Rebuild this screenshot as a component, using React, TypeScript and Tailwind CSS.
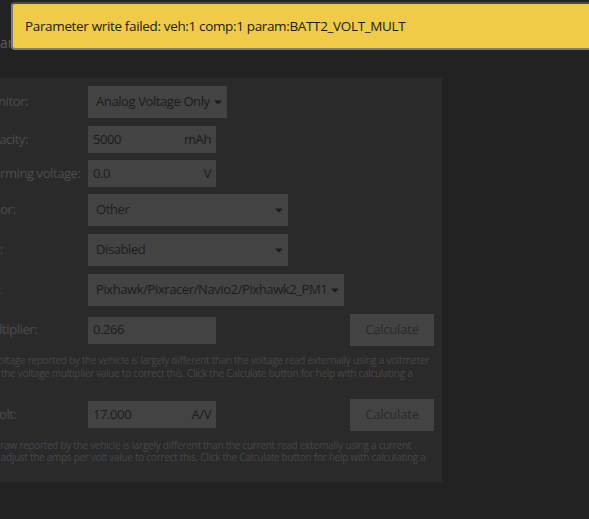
import React from "react";

const Arrow = () => (
  <svg width="8" height="5" viewBox="0 0 8 5" className="shrink-0">
    <path d="M0 0.5 L8 0.5 L4 4.5 Z" fill="#1c1c1c" />
  </svg>
);

function Label({ children }: { children: React.ReactNode }) {
  return (
    <div className="w-[153px] shrink-0 whitespace-nowrap text-[13px] tracking-[-0.42px] text-[#4d4d4d]">{children}</div>
  );
}

function Combo({ text, w, fit }: { text: string; w?: string; fit?: boolean }) {
  return (
    <div
      className={
        "h-[32px] bg-[#434343] flex items-center pl-[8px] pr-[5px] text-[13px] tracking-[-0.4px] text-[#1c1c1c] " +
        (fit ? "gap-[4px] " : "justify-between ") +
        (w ?? "")
      }
    >
      <span className="whitespace-nowrap">{text}</span>
      <Arrow />
    </div>
  );
}

function Field({ value, unit }: { value: string; unit?: string }) {
  return (
    <div className="h-[27px] w-[128px] bg-[#434343] flex items-center justify-between px-[5px] text-[13px] tracking-[-0.4px] text-[#1c1c1c]">
      <span>{value}</span>
      {unit ? <span>{unit}</span> : null}
    </div>
  );
}

function CalcButton() {
  return (
    <div className="h-[32px] w-[84px] bg-[#434343] flex items-center justify-center text-[13px] tracking-[-0.2px] text-[#2a2a2a]">
      Calculate
    </div>
  );
}

export default function App() {
  return (
    <div
      className="relative w-[589px] h-[519px] overflow-hidden bg-[#222222]"
      style={{ fontFamily: '"Open Sans", "Liberation Sans", sans-serif' }}
    >
      <div className="pt-[35px] h-[78px] text-[14px] leading-[16px] text-[#5c5c5c] whitespace-nowrap">ar</div>

      <div className="w-[442px] h-[404px] bg-[#2a2a2a] pt-[8px] overflow-hidden">
        <div className="-ml-[65px] flex flex-col">
          <div className="flex items-center h-[32px]">
            <Label>Battery monitor:</Label>
            <Combo text="Analog Voltage Only" fit />
          </div>
          <div className="flex items-center h-[27px] mt-[8px]">
            <Label>Battery capacity:</Label>
            <Field value="5000" unit="mAh" />
          </div>
          <div className="flex items-center h-[27px] mt-[7px]">
            <Label>Minimum arming voltage:</Label>
            <Field value="0.0" unit="V" />
          </div>
          <div className="flex items-center h-[32px] mt-[7px]">
            <Label>Power sensor:</Label>
            <Combo text="Other" w="w-[200px]" />
          </div>
          <div className="flex items-center h-[32px] mt-[8px]">
            <Label>Current pin:</Label>
            <Combo text="Disabled" w="w-[200px]" />
          </div>
          <div className="flex items-center h-[32px] mt-[8px]">
            <Label>Voltage pin:</Label>
            <Combo text="Pixhawk/Pixracer/Navio2/Pixhawk2_PM1" fit />
          </div>
          <div className="flex items-center h-[32px] mt-[8px]">
            <Label>Voltage multiplier:</Label>
            <Field value="0.266" />
            <div className="ml-[134px]">
              <CalcButton />
            </div>
          </div>
          <div className="mt-[8px] text-[10px] tracking-[-0.28px] leading-[12.5px] text-[#474747] whitespace-nowrap">
            <div>If the battery voltage reported by the vehicle is largely different than the voltage read externally using a voltmeter</div>
            <div>you can adjust the voltage multiplier value to correct this. Click the Calculate button for help with calculating a</div>
            <div>new value.</div>
          </div>
          <div className="flex items-center h-[32px] mt-[7px]">
            <Label>Amps per volt:</Label>
            <Field value="17.000" unit="A/V" />
            <div className="ml-[134px]">
              <CalcButton />
            </div>
          </div>
          <div className="mt-[8px] text-[10px] tracking-[-0.28px] leading-[12.5px] text-[#474747] whitespace-nowrap">
            <div>If the current draw reported by the vehicle is largely different than the current read externally using a current</div>
            <div>meter you can adjust the amps per volt value to correct this. Click the Calculate button for help with calculating a</div>
            <div>new value.</div>
          </div>
        </div>
      </div>

      <div className="absolute left-[11px] top-[2px] w-[600px] h-[48px] rounded-[4px] border-2 border-[#7d7d7d] border-t-[#4a4a4a] bg-[#efcb47] flex items-center pl-[12px] text-[13.5px] tracking-[-0.35px] text-[#1c1c1c] whitespace-nowrap">
        Parameter write failed: veh:1 comp:1 param:BATT2_VOLT_MULT
      </div>
    </div>
  );
}
